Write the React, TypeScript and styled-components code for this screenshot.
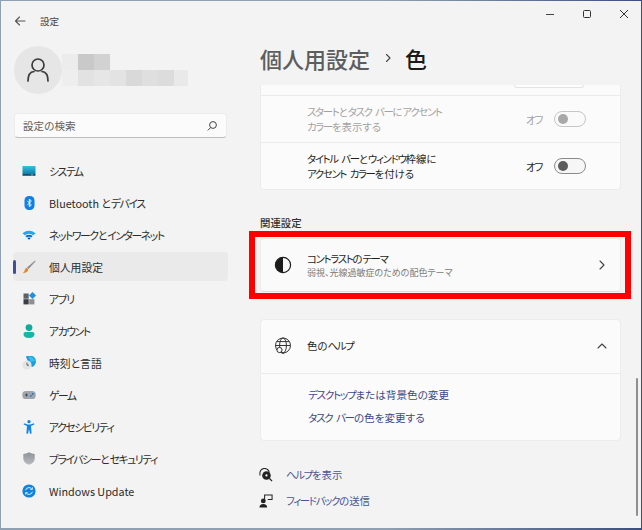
import React from 'react';
import styled, { createGlobalStyle } from 'styled-components';

const Global = createGlobalStyle`
  html, body { margin: 0; padding: 0; width: 642px; height: 530px; overflow: hidden; background: #8c9db0; }
  * { box-sizing: border-box; }
  #root { width: 642px; height: 530px; }
`;

const Frame = styled.div`
  width: 642px;
  height: 530px;
  padding: 1px 1px 2px 1px;
  background: linear-gradient(90deg, #8fa0b2 0%, #8fa0b2 60%, #3c4f7c 100%);
  font-family: "Noto Sans CJK JP", "Noto Sans", sans-serif;
  font-feature-settings: "palt";
  color: #1c1c1c;
`;
const Win = styled.div`
  width: 100%;
  height: 100%;
  background: #f3f3f3;
  display: flex;
`;
const Sidebar = styled.aside`
  width: 239px;
  flex: none;
  display: flex;
  flex-direction: column;
`;
const TitleRow = styled.div`
  height: 39px;
  display: flex;
  align-items: center;
  padding: 0 0 0 13px;
  gap: 14px;
  font-size: 9.5px;
  color: #444;
`;
const Profile = styled.div`
  margin: 6px 0 0 13px;
  display: flex;
  align-items: center;
  height: 48px;
`;
const Avatar = styled.div`
  width: 48px;
  height: 48px;
  border-radius: 50%;
  background: #e6e6e6;
  display: flex;
  align-items: center;
  justify-content: center;
`;
const Mosaic = styled.div`
  display: flex;
  flex-direction: column;
`;
const MosaicRow = styled.div`
  display: flex;
`;
const Cell = styled.span<{ $c: string; $w?: number }>`
  display: block;
  width: ${p => p.$w ?? 16}px;
  height: 16px;
  background: ${p => p.$c};
`;
const Search = styled.div`
  margin: 19px 0 0 13px;
  width: 213px;
  height: 25px;
  background: #fbfbfb;
  border: 1px solid #ececec;
  border-bottom-color: #bdbdbd;
  border-radius: 4px;
  display: flex;
  align-items: center;
  justify-content: space-between;
  padding: 0 8px;
  font-size: 10.6px;
  color: #5f5f5f;
`;
const Nav = styled.nav`
  margin: 18px 0 0 12px;
  width: 215px;
  display: flex;
  flex-direction: column;
  gap: 3px;
`;
const NavItem = styled.div<{ $active?: boolean }>`
  position: relative;
  height: 29px;
  border-radius: 4px;
  background: ${p => (p.$active ? '#eaeaea' : 'transparent')};
  display: flex;
  align-items: center;
  padding-left: 9px;
  gap: 13px;
  font-size: 10.8px;
  color: #2b2b2b;
  white-space: nowrap;
  --kana-track: -1.4px;
`;
const Kana = styled.span`
  letter-spacing: var(--kana-track, -1.3px);
  word-spacing: 2.5px;
`;
const Indicator = styled.span`
  position: absolute;
  left: 0;
  top: 8px;
  width: 3px;
  height: 14px;
  border-radius: 2px;
  background: #3f4f9a;
`;
const IconSlot = styled.span`
  width: 14px;
  height: 14px;
  flex: none;
  display: flex;
  align-items: center;
  justify-content: center;
`;
const Main = styled.main`
  position: relative;
  flex: 1;
  min-width: 0;
  display: flex;
  flex-direction: column;
`;
const Caption = styled.div`
  height: 26px;
  display: flex;
  justify-content: flex-end;
  align-items: center;
  padding-right: 9px;
  gap: 21px;
`;
const CapBtn = styled.span`
  width: 16px;
  height: 16px;
  display: flex;
  align-items: center;
  justify-content: center;
`;
const Heading = styled.h1`
  margin: 0;
  height: 58px;
  padding: 3px 0 0 20px;
  display: flex;
  align-items: center;
  font-size: 22px;
  font-weight: 500;
  color: #5d5d5d;
  line-height: 1;
  font-feature-settings: normal;
`;
const Sep = styled.span`
  width: 36px;
  display: flex;
  justify-content: center;
`;
const Current = styled.span`
  color: #1a1a1a;
  margin-left: -1px;
`;
const Scroller = styled.div`
  flex: 1;
  min-height: 0;
  overflow: hidden;
  padding-left: 20px;
  display: flex;
  flex-direction: column;
`;
const Card = styled.section`
  width: 361px;
  flex: none;
  background: #fbfbfb;
  border: 1px solid #ececec;
  border-radius: 4px;
`;
const TopCard = styled(Card)`
  border-top: none;
  border-radius: 0 0 4px 4px;
  height: 105px;
`;
const StubRow = styled.div`
  height: 11px;
  border-bottom: 1px solid #ebebeb;
  padding-left: 253px;
`;
const StubControl = styled.div`
  width: 70px;
  height: 3px;
  background: #fdfdfd;
  border: 1px solid #e4e4e4;
  border-top: none;
  border-radius: 0 0 4px 4px;
`;
const ToggleRow = styled.div<{ $muted?: boolean; $last?: boolean }>`
  height: ${p => (p.$last ? 46 : 47)}px;
  border-bottom: ${p => (p.$last ? 'none' : '1px solid #ebebeb')};
  display: flex;
  align-items: center;
  padding: 0 34px 0 46px;
  font-size: 10.4px;
  line-height: 15px;
  color: ${p => (p.$muted ? '#a3a3a3' : '#1f1f1f')};
`;
const RowText = styled.div`
  flex: 1;
  white-space: nowrap;
`;
const State = styled.span`
  width: 28px;
  font-size: 10.6px;
`;
const Toggle = styled.span<{ $muted?: boolean }>`
  width: 32px;
  height: 16px;
  border-radius: 8px;
  border: 1px solid ${p => (p.$muted ? '#c6c6c6' : '#8a8a8a')};
  background: ${p => (p.$muted ? '#fafafa' : '#f6f6f6')};
  display: flex;
  align-items: center;
  padding-left: 3px;
  &::before {
    content: '';
    width: 10px;
    height: 10px;
    border-radius: 50%;
    background: ${p => (p.$muted ? '#a8a8a8' : '#5c5c5c')};
  }
`;
const SectionLabel = styled.h2`
  margin: 25px 0 0;
  height: 15px;
  font-size: 10.4px;
  line-height: 15px;
  font-weight: 500;
  color: #333;
`;
const Highlight = styled.div`
  margin: 1px 0 0 -11px;
  width: 382px;
  height: 68px;
  flex: none;
  border: 6px solid #ff0000;
  padding: 1px 4px 0 5px;
`;
const LinkCard = styled.div`
  height: 54px;
  background: #fafafa;
  border: 1px solid #ececec;
  border-bottom-color: #dcdcdc;
  border-radius: 4px;
  display: flex;
  align-items: center;
  padding: 0 13px 0 13px;
`;
const CardIcon = styled.span`
  width: 18px;
  height: 18px;
  flex: none;
  display: flex;
  align-items: center;
  justify-content: center;
  margin-right: 15px;
`;
const CardText = styled.div`
  flex: 1;
  display: flex;
  flex-direction: column;
`;
const CardTitle = styled.span`
  font-size: 10.4px;
  line-height: 14px;
  color: #1f1f1f;
`;
const CardSub = styled.span`
  font-size: 9px;
  line-height: 13px;
  color: #7a7a7a;
`;
const HelpCard = styled(Card)`
  margin-top: 20px;
  height: 122px;
`;
const HelpHead = styled.div`
  height: 54px;
  border-bottom: 1px solid #ebebeb;
  display: flex;
  align-items: center;
  padding: 0 13px 2px;
`;
const HelpLinks = styled.div`
  padding: 13px 0 0 47px;
  display: flex;
  flex-direction: column;
  gap: 8px;
`;
const HelpLink = styled.a`
  font-size: 10.6px;
  line-height: 15px;
  color: #3c4a8a;
`;
const Footer = styled.div`
  margin: 25px 0 0 -1px;
  display: flex;
  flex-direction: column;
  gap: 9px;
`;
const FootItem = styled.div`
  display: flex;
  align-items: center;
  height: 17px;
  gap: 13px;
  font-size: 10.4px;
  color: #4a5590;
`;
const ScrollThumb = styled.div`
  position: absolute;
  right: 3px;
  top: 377px;
  width: 2px;
  height: 138px;
  background: #8f8f8f;
  border-radius: 1px;
`;

const T = ({ s }: { s: string }) => (
  <>
    {s.split(/([ァ-ヶー][ァ-ヶー ]*)/).map((part, i) =>
      i % 2 === 1 ? <Kana key={i}>{part}</Kana> : part
    )}
  </>
);

const Chevron = ({ d, size = 10 }: { d: string; size?: number }) => (
  <svg width={size} height={size} viewBox="0 0 10 10" fill="none" stroke="#444" strokeWidth="1.1" strokeLinecap="round" strokeLinejoin="round"><path d={d} /></svg>
);

const SystemIcon = () => (
  <svg width="14" height="12" viewBox="0 0 14 12">
    <defs><linearGradient id="sys" x1="0" y1="0" x2="0" y2="1"><stop offset="0" stopColor="#34c1e4" /><stop offset="1" stopColor="#0e7fa8" /></linearGradient></defs>
    <rect x="0.5" y="1" width="13" height="8" fill="url(#sys)" />
    <rect x="0.5" y="9" width="13" height="1.8" fill="#1c4c66" />
    <rect x="9" y="9.4" width="2" height="1" fill="#8fb8c8" />
  </svg>
);
const BluetoothIcon = () => (
  <svg width="11" height="14" viewBox="0 0 11 14">
    <rect x="0.5" y="0" width="10" height="14" rx="4.5" fill="#0f7fe6" />
    <path d="M3.3 4.8 L7.3 8.9 L5.4 11 V3 L7.3 5.1 L3.3 9.2" fill="none" stroke="#fff" strokeWidth="0.9" />
  </svg>
);
const WifiIcon = () => (
  <svg width="14" height="10" viewBox="0 0 14 10">
    <path d="M0.5 3.2 Q7 -1.6 13.5 3.2 L11.4 5.3 Q7 2.2 2.6 5.3 Z" fill="#22a7ee" />
    <path d="M3.3 6 Q7 3.4 10.7 6 L9.3 7.4 Q7 5.9 4.7 7.4 Z" fill="#0e71c9" />
    <path d="M5.3 8 Q7 7 8.7 8 L7 9.7 Z" fill="#0b3f8c" />
  </svg>
);
const BrushIcon = () => (
  <svg width="14" height="14" viewBox="0 0 14 14">
    <path d="M13 0.6 L13.6 1.2 L6.6 9 L5 7.4 Z" fill="#8a8f96" />
    <path d="M4.7 7.7 L6.3 9.3 Q5.8 12.6 0.8 13.2 Q3 11.4 2.9 9.6 Q3.1 8.2 4.7 7.7 Z" fill="#f0811f" />
  </svg>
);
const AppsIcon = () => (
  <svg width="13" height="13" viewBox="0 0 13 13">
    <rect x="0.5" y="1.5" width="5.2" height="5.2" fill="#5b6168" />
    <rect x="0.5" y="7.2" width="5.2" height="5.2" fill="#3b3f45" />
    <rect x="6.2" y="7.2" width="5.2" height="5.2" fill="#8b9096" />
    <path d="M9.5 0 L13 3.5 L9.5 7 L6 3.5 Z" fill="#1c8fe8" />
  </svg>
);
const AccountIcon = () => (
  <svg width="12" height="14" viewBox="0 0 12 14">
    <circle cx="6" cy="3.6" r="3.4" fill="#16a89a" />
    <path d="M0.5 10 Q0.5 8 2.5 8 H9.5 Q11.5 8 11.5 10 Q11.5 14 6 14 Q0.5 14 0.5 10 Z" fill="#17b5a6" />
  </svg>
);
const ClockIcon = () => (
  <svg width="14" height="14" viewBox="0 0 14 14">
    <path d="M4 0.8 A6 6 0 1 1 10 11 L7 8 Z" fill="#1a9ce0" />
    <path d="M6 0.6 A6 6 0 0 1 13 5 L9 6 Z" fill="#33c3e8" />
    <circle cx="5" cy="9" r="4.6" fill="#e4e4e4" />
    <path d="M5 6.6 V9.2 H7" fill="none" stroke="#444" strokeWidth="0.8" />
  </svg>
);
const GameIcon = () => (
  <svg width="14" height="10" viewBox="0 0 14 10">
    <rect x="0.3" y="1" width="13.4" height="8" rx="3.6" fill="#a0a5ab" />
    <path d="M3 5 H6 M4.5 3.5 V6.5" stroke="#3f444a" strokeWidth="0.9" />
    <circle cx="9" cy="5.8" r="0.9" fill="#1978c8" />
    <circle cx="10.8" cy="4" r="0.9" fill="#1978c8" />
  </svg>
);
const AccessIcon = () => (
  <svg width="12" height="14" viewBox="0 0 12 14">
    <circle cx="6" cy="1.7" r="1.6" fill="#1184e0" />
    <path d="M1 3.2 L4.6 4.6 H7.4 L11 3.2 L11.3 4.4 L8 6 L8.6 13.6 L7 13.8 L6 9 L5 13.8 L3.4 13.6 L4 6 L0.7 4.4 Z" fill="#1184e0" />
  </svg>
);
const ShieldIcon = () => (
  <svg width="12" height="13" viewBox="0 0 12 13">
    <defs><linearGradient id="sh" x1="0" y1="0" x2="0" y2="1"><stop offset="0" stopColor="#8e9398" /><stop offset="1" stopColor="#b9bcc0" /></linearGradient></defs>
    <path d="M6 0.3 Q9 2 11.7 2 V6.4 Q11.7 10.6 6 12.8 Q0.3 10.6 0.3 6.4 V2 Q3 2 6 0.3 Z" fill="url(#sh)" />
  </svg>
);
const UpdateIcon = () => (
  <svg width="14" height="14" viewBox="0 0 14 14">
    <circle cx="7" cy="7" r="6.6" fill="#0f83e0" />
    <path d="M3.6 6.2 A3.5 3.5 0 0 1 9.8 5 M10.4 7.8 A3.5 3.5 0 0 1 4.2 9" fill="none" stroke="#fff" strokeWidth="0.9" />
    <path d="M10.4 3.4 V5.4 H8.4 M3.6 10.6 V8.6 H5.6" fill="none" stroke="#fff" strokeWidth="0.8" />
  </svg>
);

const navItems: { label: string; icon: React.ReactNode; active?: boolean }[] = [
  { label: 'システム', icon: <SystemIcon /> },
  { label: 'Bluetooth とデバイス', icon: <BluetoothIcon /> },
  { label: 'ネットワークとインターネット', icon: <WifiIcon /> },
  { label: '個人用設定', icon: <BrushIcon />, active: true },
  { label: 'アプリ', icon: <AppsIcon /> },
  { label: 'アカウント', icon: <AccountIcon /> },
  { label: '時刻と言語', icon: <ClockIcon /> },
  { label: 'ゲーム', icon: <GameIcon /> },
  { label: 'アクセシビリティ', icon: <AccessIcon /> },
  { label: 'プライバシーとセキュリティ', icon: <ShieldIcon /> },
  { label: 'Windows Update', icon: <UpdateIcon /> },
];

const row1 = ['#ececec', '#c9c9c9', '#d2d2d2'];
const row2: [string, number][] = [
  ['#eeeeee', 16], ['#e2e2e2', 16], ['#e6e6e6', 16], ['#e3e3e3', 16], ['#d9d9d9', 16], ['#dfdfdf', 16], ['#dcdcdc', 16], ['#e9e9e9', 14],
];

export default function App() {
  return (
    <Frame>
      <Global />
      <Win>
        <Sidebar>
          <TitleRow>
            <svg width="12" height="12" viewBox="0 0 12 12" fill="none" stroke="#555" strokeWidth="1.1" strokeLinecap="round" strokeLinejoin="round"><path d="M1.5 6 H11 M5.5 2 L1.5 6 L5.5 10" /></svg>
            <span>設定</span>
          </TitleRow>
          <Profile>
            <Avatar>
              <svg width="22" height="26" viewBox="0 0 22 26" fill="none" stroke="#3c3c3c" strokeWidth="1.7" strokeLinecap="round"><circle cx="11" cy="8" r="6" /><path d="M1 24 Q1 15 7 14.5 M21 24 Q21 15 15 14.5" /></svg>
            </Avatar>
            <Mosaic>
              <MosaicRow>{row1.map((c, i) => <Cell key={i} $c={c} />)}</MosaicRow>
              <MosaicRow>{row2.map(([c, w], i) => <Cell key={i} $c={c} $w={w} />)}</MosaicRow>
            </Mosaic>
          </Profile>
          <Search>
            <span>設定の検索</span>
            <svg width="12" height="12" viewBox="0 0 12 12" fill="none" stroke="#444" strokeWidth="1"><circle cx="7" cy="5" r="3.4" /><path d="M4.6 7.6 L1.8 10.4" /></svg>
          </Search>
          <Nav>
            {navItems.map(it => (
              <NavItem key={it.label} $active={it.active}>
                {it.active && <Indicator />}
                <IconSlot>{it.icon}</IconSlot>
                <span><T s={it.label} /></span>
              </NavItem>
            ))}
          </Nav>
        </Sidebar>
        <Main>
          <Caption>
            <CapBtn><svg width="12" height="12" viewBox="0 0 12 12" stroke="#444" strokeWidth="1"><path d="M2 6.5 H10" /></svg></CapBtn>
            <CapBtn><svg width="12" height="12" viewBox="0 0 12 12" fill="none" stroke="#333" strokeWidth="1"><rect x="2.5" y="2.5" width="7" height="7" rx="1" /></svg></CapBtn>
            <CapBtn><svg width="12" height="12" viewBox="0 0 12 12" stroke="#333" strokeWidth="1"><path d="M2 2 L10 10 M10 2 L2 10" /></svg></CapBtn>
          </Caption>
          <Heading>
            個人用設定
            <Sep><Chevron d="M3.5 1.5 L7 5 L3.5 8.5" size={10} /></Sep>
            <Current>色</Current>
          </Heading>
          <Scroller>
            <TopCard>
              <StubRow><StubControl /></StubRow>
              <ToggleRow $muted>
                <RowText><T s="スタートとタスク バーにアクセント" /><br /><T s="カラーを表示する" /></RowText>
                <State><T s="オフ" /></State>
                <Toggle $muted />
              </ToggleRow>
              <ToggleRow $last>
                <RowText><T s="タイトル バーとウィンドウ枠線に" /><br /><T s="アクセント カラーを付ける" /></RowText>
                <State><T s="オフ" /></State>
                <Toggle />
              </ToggleRow>
            </TopCard>
            <SectionLabel>関連設定</SectionLabel>
            <Highlight>
              <LinkCard>
                <CardIcon>
                  <svg width="18" height="18" viewBox="0 0 18 18"><circle cx="9" cy="9" r="7.6" fill="none" stroke="#1c1c1c" strokeWidth="1.2" /><path d="M9 1.4 A7.6 7.6 0 0 0 9 16.6 Z" fill="#1c1c1c" /></svg>
                </CardIcon>
                <CardText>
                  <CardTitle><T s="コントラストのテーマ" /></CardTitle>
                  <CardSub>弱視、光線過敏症のための配色テーマ</CardSub>
                </CardText>
                <Chevron d="M3 1 L7 5 L3 9" />
              </LinkCard>
            </Highlight>
            <HelpCard>
              <HelpHead>
                <CardIcon>
                  <svg width="18" height="18" viewBox="0 0 18 18" fill="none" stroke="#333" strokeWidth="1"><circle cx="9" cy="8.5" r="7.5" /><ellipse cx="9" cy="8.5" rx="3.4" ry="7.5" /><path d="M1.5 8.5 H16.5 M2.6 4.6 H15.4 M2.6 12.4 H8" /><circle cx="5.5" cy="13" r="2.6" fill="#fbfbfb" /><path d="M7.4 14.9 L9.6 17.1" /></svg>
                </CardIcon>
                <CardText><CardTitle><T s="色のヘルプ" /></CardTitle></CardText>
                <Chevron d="M1 7 L5 3 L9 7" />
              </HelpHead>
              <HelpLinks>
                <HelpLink><T s="デスクトップまたは背景色の変更" /></HelpLink>
                <HelpLink><T s="タスク バーの色を変更する" /></HelpLink>
              </HelpLinks>
            </HelpCard>
            <Footer>
              <FootItem>
                <svg width="14" height="14" viewBox="0 0 15 15"><path d="M1 8 V6 A5 5 0 0 1 11 5" fill="none" stroke="#222" strokeWidth="1.1" /><circle cx="8" cy="8" r="4.6" fill="#222" /><path d="M11 11 L14 14" stroke="#222" strokeWidth="1.3" /><circle cx="8" cy="8" r="1.2" fill="#fff" /></svg>
                <span><T s="ヘルプを表示" /></span>
              </FootItem>
              <FootItem>
                <svg width="14" height="14" viewBox="0 0 15 15"><circle cx="4.6" cy="7.4" r="2.6" fill="#222" /><path d="M0.5 14.5 Q0.5 10.6 4.6 10.6 Q8.7 10.6 8.7 14.5 Z" fill="#222" /><path d="M6 5.4 V1 H14 V6 H9.4" fill="none" stroke="#222" strokeWidth="1.1" /></svg>
                <span><T s="フィードバックの送信" /></span>
              </FootItem>
            </Footer>
          </Scroller>
          <ScrollThumb />
        </Main>
      </Win>
    </Frame>
  );
}
